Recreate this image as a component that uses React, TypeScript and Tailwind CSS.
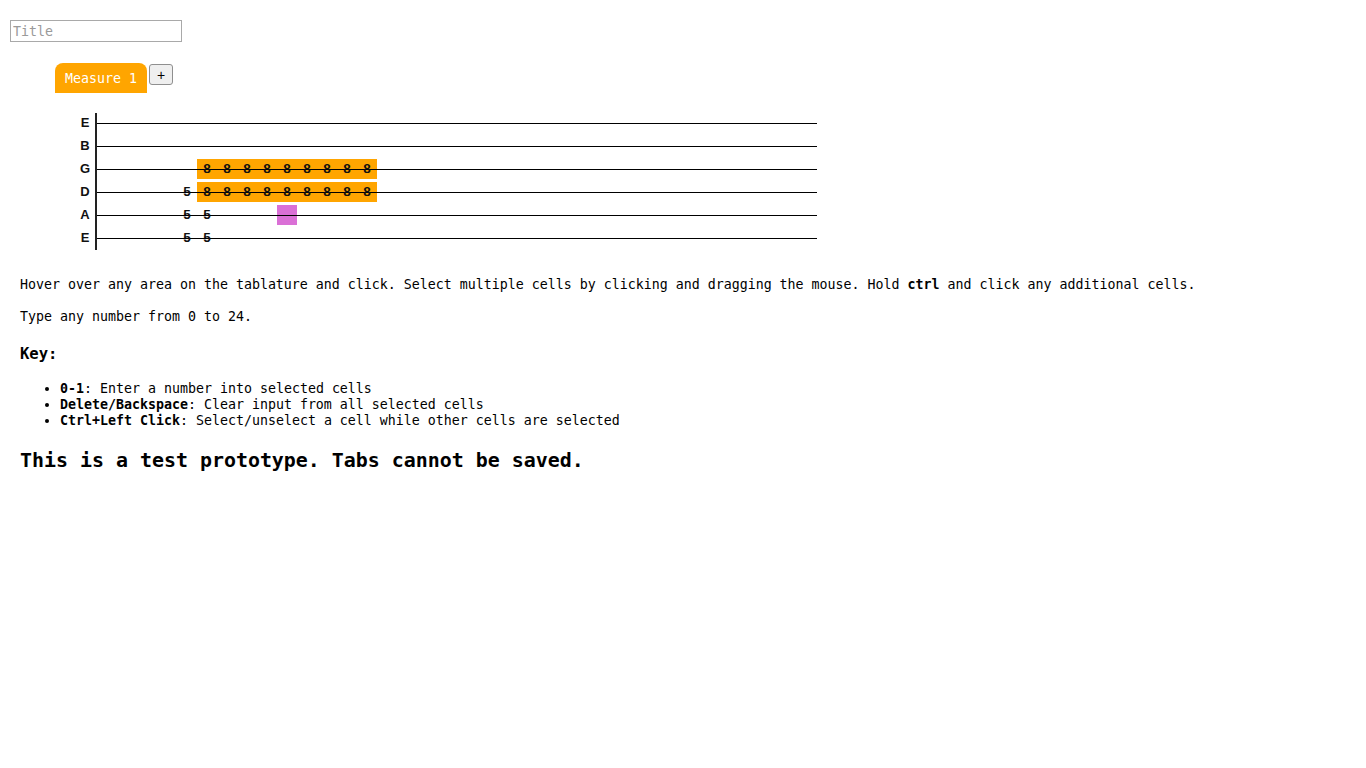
const strings = ['E', 'B', 'G', 'D', 'A', 'E'];
const COLS = 36;

type Cell = { v?: string; sel?: boolean; hover?: boolean };

const buildRow = (r: number): Cell[] => {
  const row: Cell[] = Array.from({ length: COLS }, () => ({}));
  if (r === 2 || r === 3) {
    for (let c = 5; c <= 13; c++) row[c] = { v: '8', sel: true };
  }
  if (r === 3) row[4] = { v: '5' };
  if (r === 4 || r === 5) {
    row[4] = { v: '5' };
    row[5] = { v: '5' };
  }
  if (r === 4) row[9] = { hover: true };
  return row;
};

const Tablature = () => {
  return (
    <div className="mt-[20px] ml-[65px] flex items-start">
      {/* string names */}
      <div className="flex flex-col w-[20px]">
        {strings.map((s, i) => (
          <div key={i} className="h-[23px] flex justify-center font-['Liberation_Sans',sans-serif] font-bold text-[13px] leading-[20px] text-[#111]">
            {s}
          </div>
        ))}
      </div>
      <div className="w-[2px] h-[137px] bg-[#222]" />
      <div className="flex flex-col">
        {strings.map((_, r) => (
          <div key={r} className="relative h-[23px]">
            <div className="flex">
              {buildRow(r).map((c, i) => (
                <div
                  key={i}
                  className={
                    'w-[20px] h-[20px] ' +
                    (c.sel ? 'bg-[#ffa500]' : c.hover ? 'bg-[#da70d6]' : '')
                  }
                />
              ))}
            </div>
            <div className="absolute left-0 right-0 top-[10px] h-px bg-black" />
            <div className="absolute left-0 top-0 flex">
              {buildRow(r).map((c, i) => (
                <div key={i} className="w-[20px] h-[20px] flex items-center justify-center font-['Liberation_Sans',sans-serif] font-bold text-[13.5px] leading-none text-[#111]">
                  {c.v}
                </div>
              ))}
            </div>
          </div>
        ))}
      </div>
    </div>
  );
};

export default function App() {
  return (
    <div className="min-h-screen bg-white text-black font-['DejaVu_Sans_Mono',monospace] text-[13.29px] pt-[20px] pl-[10px]">
      <input
        placeholder="Title"
        className="block w-[172px] h-[22px] border border-[#a9a9a9] px-[2px] text-[13.29px] placeholder:text-[#9a9a9a] outline-none"
      />

      {/* Measures */}
      <div className="mt-[21px] ml-[45px] flex items-start gap-[2px]">
        <div className="h-[30px] px-[10px] pt-[1px] bg-[#ffa500] rounded-t-[8px] text-white flex items-center">
          Measure 1
        </div>
        <button className="mt-[1px] w-[24px] h-[21px] bg-[#efefef] border border-[#8f8f8f] rounded-[3px] text-[14px] leading-none font-['Liberation_Sans',sans-serif]">
          +
        </button>
      </div>

      <Tablature />

      <div className="pl-[10px] mt-[26px]">
        <p className="leading-[16px]">
          Hover over any area on the tablature and click. Select multiple cells by clicking and dragging the mouse. Hold <b>ctrl</b> and click any additional cells.
        </p>
        <p className="leading-[16px] mt-[16px]">Type any number from 0 to 24.</p>
        <h3 className="mt-[20px] text-[15.55px] font-bold leading-[18px]">Key:</h3>
        <ul className="mt-[18px] list-disc pl-[40px] leading-[16px]">
          <li>
            <b>0-1</b>: Enter a number into selected cells
          </li>
          <li>
            <b>Delete/Backspace</b>: Clear input from all selected cells
          </li>
          <li>
            <b>Ctrl+Left Click</b>: Select/unselect a cell while other cells are selected
          </li>
        </ul>
        <h2 className="mt-[20px] text-[19.93px] font-bold leading-[24px]">This is a test prototype. Tabs cannot be saved.</h2>
      </div>
    </div>
  );
}
